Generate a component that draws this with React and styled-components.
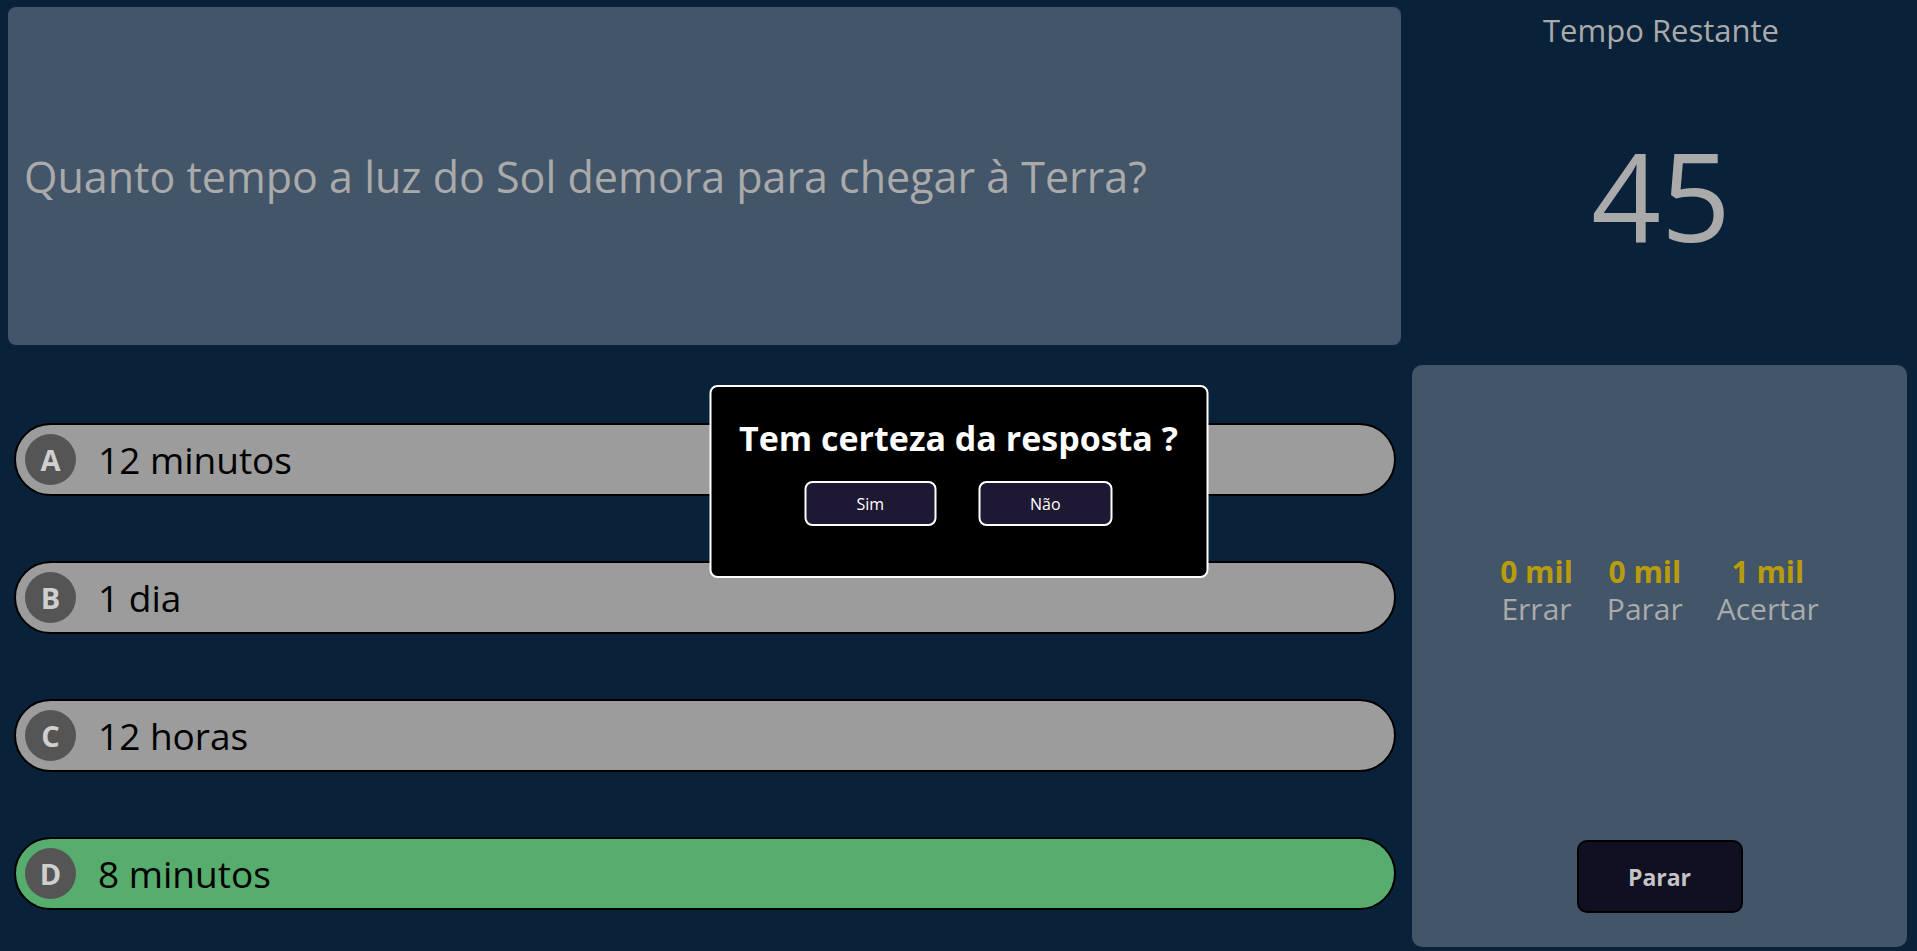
import React from "react";
import styled, { createGlobalStyle } from "styled-components";

const GlobalStyle = createGlobalStyle`
  html, body {
    margin: 0;
    padding: 0;
    background: #0a2239;
  }
  body {
    font-family: "Open Sans", "Noto Sans", sans-serif;
  }
  * {
    box-sizing: border-box;
  }
`;

const answers = [
  { letter: "A", text: "12 minutos" },
  { letter: "B", text: "1 dia" },
  { letter: "C", text: "12 horas" },
  { letter: "D", text: "8 minutos", correct: true }
];

const prizes = [
  { value: "0 mil", label: "Errar" },
  { value: "0 mil", label: "Parar" },
  { value: "1 mil", label: "Acertar" }
];

export default function App() {
  return (
    <>
      <GlobalStyle />
      <Page>
        <QuestionBox>
          <QuestionText>
            Quanto tempo a luz do Sol demora para chegar à Terra?
          </QuestionText>
        </QuestionBox>

        <TimerArea>
          <TimerTitle>Tempo Restante</TimerTitle>
          <TimerValue>45</TimerValue>
        </TimerArea>

        <AnswerList>
          {answers.map(answer => (
            <AnswerRow key={answer.letter} correct={answer.correct}>
              <LetterBadge>{answer.letter}</LetterBadge>
              <AnswerText>{answer.text}</AnswerText>
            </AnswerRow>
          ))}
        </AnswerList>

        <ScorePanel>
          <PrizeRow>
            {prizes.map(prize => (
              <Prize key={prize.label}>
                <PrizeValue>{prize.value}</PrizeValue>
                <PrizeLabel>{prize.label}</PrizeLabel>
              </Prize>
            ))}
          </PrizeRow>
          <StopButton>Parar</StopButton>
        </ScorePanel>
      </Page>

      <ConfirmModal>
        <ModalTitle>Tem certeza da resposta ?</ModalTitle>
        <ModalActions>
          <ModalButton>Sim</ModalButton>
          <ModalButton>Não</ModalButton>
        </ModalActions>
      </ConfirmModal>
    </>
  );
}

const Page = styled.div`
  display: grid;
  grid-template-columns: 1405px 1fr;
  grid-template-rows: 355px 1fr;
  height: 100vh;
  background: #0a2239;
`;

const QuestionBox = styled.div`
  margin: 7px 4px 10px 8px;
  background: #435569;
  border-radius: 8px;
  display: flex;
  align-items: center;
  padding: 0 16px;
`;

const QuestionText = styled.p`
  margin: 0;
  font-size: 43px;
  color: #aaaaaa;
`;

const TimerArea = styled.div`
  display: flex;
  flex-direction: column;
  align-items: center;
  padding-top: 12px;
`;

const TimerTitle = styled.div`
  font-size: 31px;
  line-height: 37px;
  color: #aaaaaa;
`;

const TimerValue = styled.div`
  flex: 1;
  display: flex;
  align-items: center;
  justify-content: center;
  padding-bottom: 15px;
  font-size: 122px;
  line-height: 1;
  color: #aaaaaa;
`;

const AnswerList = styled.div`
  display: flex;
  flex-direction: column;
  gap: 65px;
  padding: 68px 9px 0 14px;
`;

const AnswerRow = styled.div`
  height: 73px;
  border: 2px solid #000;
  border-radius: 37px;
  background: ${p => (p.correct ? "#56ad6d" : "#9c9c9c")};
  display: flex;
  align-items: center;
  gap: 22px;
  padding-left: 9px;
`;

const LetterBadge = styled.span`
  width: 51px;
  height: 51px;
  border-radius: 50%;
  background: #555555;
  color: #cfcfcf;
  font-size: 29px;
  font-weight: 700;
  display: flex;
  align-items: center;
  justify-content: center;
`;

const AnswerText = styled.span`
  font-size: 37px;
  font-weight: 500;
  color: #000;
`;

const ScorePanel = styled.div`
  margin: 10px 10px 4px 7px;
  background: #435569;
  border-radius: 10px;
  display: flex;
  flex-direction: column;
  align-items: center;
`;

const PrizeRow = styled.div`
  display: flex;
  gap: 34px;
  margin-top: 188px;
`;

const Prize = styled.div`
  display: flex;
  flex-direction: column;
  align-items: center;
  font-size: 30px;
  line-height: 37px;
`;

const PrizeValue = styled.span`
  color: #b89c0b;
  font-weight: 700;
`;

const PrizeLabel = styled.span`
  color: #aaaaaa;
`;

const StopButton = styled.button`
  margin-top: auto;
  margin-bottom: 34px;
  width: 166px;
  height: 73px;
  background: #110f22;
  border: 2px solid #000;
  border-radius: 10px;
  color: #c4c4c4;
  font-family: inherit;
  font-size: 23px;
  font-weight: 700;
`;

const ConfirmModal = styled.div`
  position: fixed;
  top: 385px;
  left: 50%;
  transform: translateX(-50%);
  width: 499px;
  height: 193px;
  background: #000;
  border: 2px solid #fff;
  border-radius: 8px;
  display: flex;
  flex-direction: column;
  align-items: center;
  padding-top: 31px;
`;

const ModalTitle = styled.div`
  font-size: 34px;
  line-height: 41px;
  font-weight: 700;
  color: #fff;
`;

const ModalActions = styled.div`
  display: flex;
  gap: 42px;
  margin-top: 22px;
`;

const ModalButton = styled.button`
  height: 45px;
  padding: 0 50px;
  background: #1e1832;
  border: 2px solid #fff;
  border-radius: 8px;
  color: #fff;
  font-family: inherit;
  font-size: 16px;
  font-weight: 500;
`;
